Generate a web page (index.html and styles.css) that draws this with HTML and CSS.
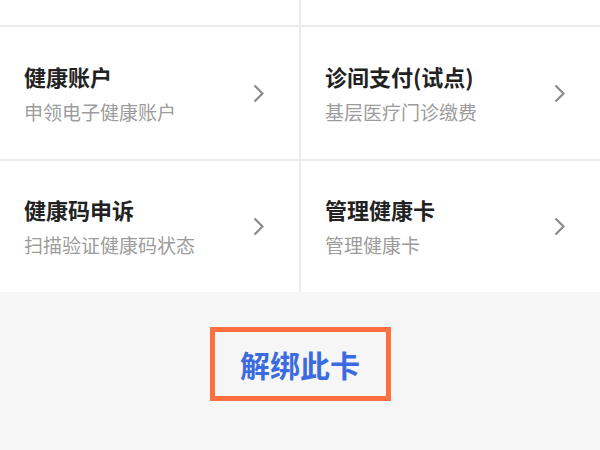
FILE: index.html
```html
<!DOCTYPE html>
<html lang="zh-CN">
<head>
<meta charset="utf-8">
<title>健康卡</title>
<link rel="stylesheet" href="styles.css">
</head>
<body>
<div class="grid">
  <div class="cell top"></div>
  <div class="cell top"></div>
  <div class="cell">
    <div class="text">
      <div class="title">健康账户</div>
      <div class="sub">申领电子健康账户</div>
    </div>
    <svg class="chev" width="11" height="19" viewBox="0 0 11 19"><path d="M1.5 1.5 L9.5 9.5 L1.5 17.5" fill="none" stroke="#8a8a8a" stroke-width="2.2"/></svg>
  </div>
  <div class="cell">
    <div class="text">
      <div class="title">诊间支付(试点)</div>
      <div class="sub">基层医疗门诊缴费</div>
    </div>
    <svg class="chev" width="11" height="19" viewBox="0 0 11 19"><path d="M1.5 1.5 L9.5 9.5 L1.5 17.5" fill="none" stroke="#8a8a8a" stroke-width="2.2"/></svg>
  </div>
  <div class="cell">
    <div class="text">
      <div class="title">健康码申诉</div>
      <div class="sub">扫描验证健康码状态</div>
    </div>
    <svg class="chev" width="11" height="19" viewBox="0 0 11 19"><path d="M1.5 1.5 L9.5 9.5 L1.5 17.5" fill="none" stroke="#8a8a8a" stroke-width="2.2"/></svg>
  </div>
  <div class="cell">
    <div class="text">
      <div class="title">管理健康卡</div>
      <div class="sub">管理健康卡</div>
    </div>
    <svg class="chev" width="11" height="19" viewBox="0 0 11 19"><path d="M1.5 1.5 L9.5 9.5 L1.5 17.5" fill="none" stroke="#8a8a8a" stroke-width="2.2"/></svg>
  </div>
</div>
<div class="footer">
  <div class="unbind">解绑此卡</div>
</div>
</body>
</html>
```
FILE: styles.css
```css
html, body {
  margin: 0;
  padding: 0;
}
body {
  width: 600px;
  height: 450px;
  overflow: hidden;
  background: #f6f6f6;
  font-family: "Noto Sans CJK SC", "Noto Sans", sans-serif;
}
.grid {
  display: grid;
  grid-template-columns: 299px 299px;
  grid-template-rows: 25px 132px 131px;
  gap: 2px;
  background: #ebebeb;
}
.cell {
  background: #ffffff;
  display: flex;
  align-items: center;
  justify-content: space-between;
  padding: 0 35px 0 24px;
}
.text {
  display: flex;
  flex-direction: column;
}
.title {
  font-size: 22px;
  line-height: 24px;
  font-weight: 700;
  color: #222222;
}
.sub {
  margin-top: 13px;
  font-size: 19px;
  line-height: 22px;
  color: #9c9c9c;
}
.chev {
  display: block;
  flex: none;
}
.footer {
  display: flex;
  justify-content: center;
  padding-top: 35px;
}
.unbind {
  width: 171px;
  height: 64px;
  border: 5px solid #fd6e40;
  display: flex;
  align-items: center;
  justify-content: center;
  font-size: 30px;
  font-weight: 700;
  color: #3a6be0;
}
```
